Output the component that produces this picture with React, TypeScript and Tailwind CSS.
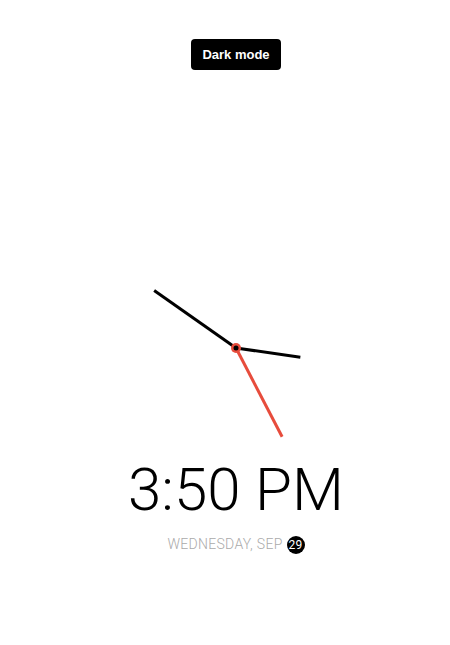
const hands = [
  { len: 65, deg: (3 * 360) / 11, color: "#000000" },
  { len: 100, deg: (50 * 360) / 59, color: "#000000" },
  { len: 100, deg: (25 * 360) / 59, color: "#e74c3c" },
]

function Clock() {
  return (
    <svg width="200" height="200" viewBox="0 0 200 200" className="block">
      {hands.map((h, i) => {
        const r = (h.deg * Math.PI) / 180
        return (
          <line
            key={i}
            x1="100"
            y1="100"
            x2={100 + h.len * Math.sin(r)}
            y2={100 - h.len * Math.cos(r)}
            stroke={h.color}
            strokeWidth="3"
          />
        )
      })}
      <circle cx="100" cy="100" r="5" fill="#e74c3c" />
      <circle cx="100" cy="100" r="2.5" fill="#000000" />
    </svg>
  )
}

export default function App() {
  return (
    <div className="h-[645px] w-[450px] bg-white flex flex-col items-center pl-[22px] font-['Roboto',sans-serif]">
      <button className="mt-[39px] rounded-[4px] bg-black px-[11px] py-2 text-[13px] leading-[15px] font-bold text-white font-['Liberation_Sans',Arial,sans-serif]">
        Dark mode
      </button>

      <div className="mt-[178px]">
        <Clock />
      </div>

      <div className="mt-[7px] text-[60px] leading-[70px] font-light text-black">3:50 PM</div>

      <div className="mt-[9px] flex items-center gap-[4px] text-[14px] font-light uppercase tracking-[0.3px] text-[#aaaaaa]">
        <span>Wednesday, Sep</span>
        <span className="inline-flex h-[18px] w-[18px] items-center justify-center rounded-full bg-black text-[12px] font-normal leading-[18px] text-white">
          29
        </span>
      </div>
    </div>
  )
}
